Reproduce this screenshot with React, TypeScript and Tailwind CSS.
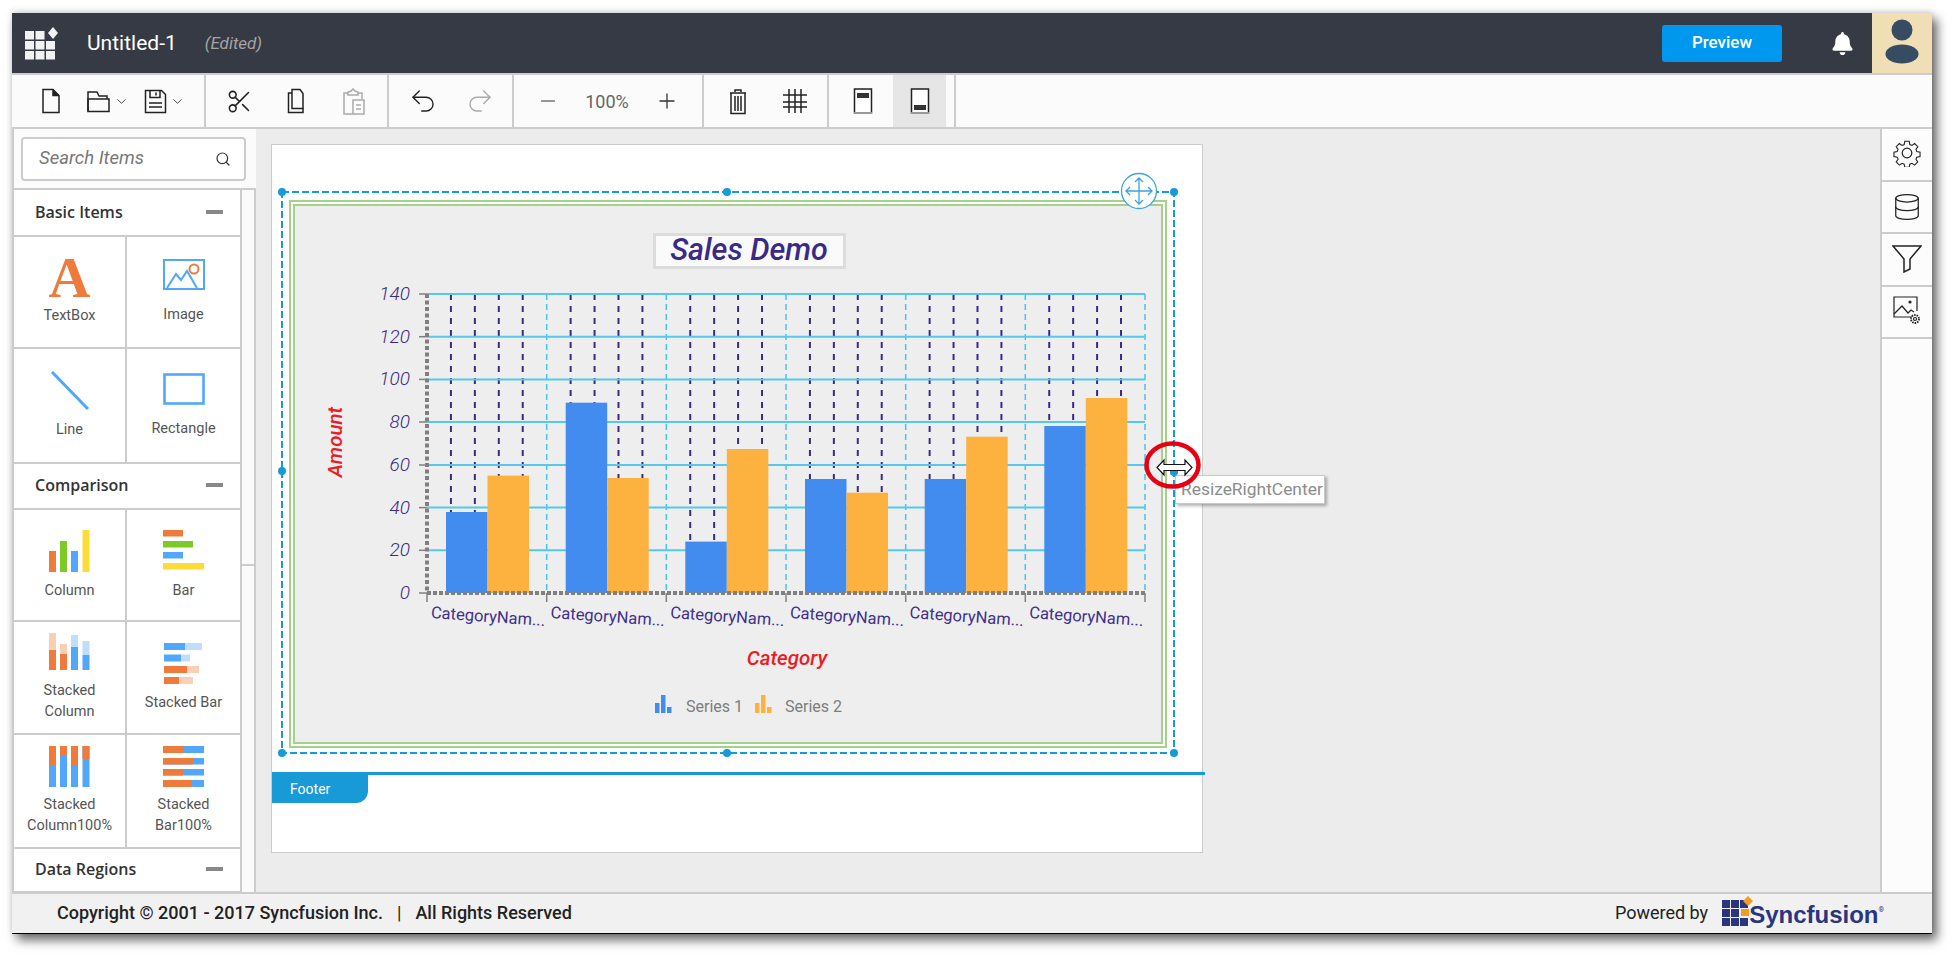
import React from 'react';
import { Scissors, Undo2, Redo2, Minus, Plus, Search, ChevronDown, Database } from 'lucide-react';
import { FaBell } from 'react-icons/fa';

const ORANGE = '#ee7b3c';
const ORANGE_LIGHT = '#f9cfb6';
const BLUE = '#52a7fb';
const BLUE_LIGHT = '#c0defc';
const GREEN = '#7dc926';
const YELLOW = '#fddc36';

// icons of the toolbar
const DocIcon = () => (
  <svg width="20" height="26" viewBox="0 0 20 26" fill="none" stroke="#222" strokeWidth="1.5">
    <path d="M2 1.5h10l6 6v17H2z" />
    <path d="M12 1.5v6h6" fill="#222" />
  </svg>
);
const FolderIcon = () => (
  <svg width="25" height="24" viewBox="0 0 25 24" fill="none" stroke="#222" strokeWidth="1.5">
    <path d="M2 22.5V3h9l2 4h8v3" />
    <path d="M2 10h21v12.5H2z" />
  </svg>
);
const SaveIcon = () => (
  <svg width="23" height="25" viewBox="0 0 23 25" fill="none" stroke="#222" strokeWidth="1.5">
    <path d="M1.5 1.5h16l4 4v18h-20z" />
    <path d="M6 1.5v7h10v-7" />
    <path d="M12 3.5v3" />
    <path d="M5 14h13M5 18h13" />
  </svg>
);
const CopyIcon = () => (
  <svg width="22" height="26" viewBox="0 0 22 26" fill="none" stroke="#222" strokeWidth="1.5">
    <path d="M6 20.5v-19h8l3 4v15z" />
    <path d="M6 5H2.5v19.5h14.5v-4" />
  </svg>
);
const PasteIcon = () => (
  <svg width="24" height="27" viewBox="0 0 24 27" fill="none" stroke="#aaa" strokeWidth="1.5">
    <path d="M6 5H2v21h9" />
    <path d="M16 5h4v6" />
    <path d="M6 7V4l3-1 2-2 2 2 3 1v3z" />
    <path d="M11 12h11v14H11zM14 17h5M14 21h5" />
  </svg>
);
const TrashIcon = () => (
  <svg width="20" height="27" viewBox="0 0 20 27" fill="none" stroke="#222" strokeWidth="1.5">
    <path d="M2 5h16M7 4V2h6v2" />
    <path d="M3 5v20.5h14V5" />
    <path d="M7 8v15M10 8v15M13 8v15" />
  </svg>
);
const GridIcon = () => (
  <svg width="26" height="26" viewBox="0 0 26 26" fill="none" stroke="#222" strokeWidth="1.5">
    <path d="M7 1v24M13 1v24M19 1v24M1 7h24M1 14h24M1 19h24" />
  </svg>
);
const DeviceIcon = ({ bottom }: { bottom?: boolean }) => (
  <svg width="20" height="26" viewBox="0 0 20 26" fill="none">
    <path d="M1.5 1h17v24h-17z" fill="#fff" stroke="#222" strokeWidth="1.5" />
    <path d="M1 25h18" stroke="#999" strokeWidth="2" />
    <rect x="4" y={bottom ? 17 : 5} width="12" height="5" fill="#333" />
  </svg>
);

const ToolButton = ({ children, active, wide }: { children: React.ReactNode; active?: boolean; wide?: boolean }) => (
  <div className={`flex h-full items-center justify-center ${wide ? 'w-[58px]' : 'w-[53px]'} ${active ? 'bg-[#e6e6e6]' : ''}`}>
    {children}
  </div>
);

const ToolGroup = ({ children, className }: { children: React.ReactNode; className: string }) => (
  <div className={`flex h-full gap-[4px] border-r-2 border-[#cccccc] ${className}`}>{children}</div>
);

const Toolbar = () => (
  <div className="flex h-[56px] border-y-2 border-[#cccccc] bg-[#fbfbfb]">
    <ToolGroup className="w-[194px] pl-[12px]">
      <ToolButton><DocIcon /></ToolButton>
      <ToolButton>
        <FolderIcon />
        <ChevronDown size={15} strokeWidth={1.4} className="ml-[3px] text-[#333]" />
      </ToolButton>
      <ToolButton>
        <SaveIcon />
        <ChevronDown size={15} strokeWidth={1.4} className="ml-[3px] text-[#333]" />
      </ToolButton>
    </ToolGroup>
    <ToolGroup className="w-[183px] pl-[7px]">
      <ToolButton><Scissors size={27} strokeWidth={1.4} className="text-[#222]" /></ToolButton>
      <ToolButton><CopyIcon /></ToolButton>
      <ToolButton><PasteIcon /></ToolButton>
    </ToolGroup>
    <ToolGroup className="w-[125px] pl-[7px]">
      <ToolButton><Undo2 size={30} strokeWidth={1.1} className="text-[#222]" /></ToolButton>
      <ToolButton><Redo2 size={30} strokeWidth={1.1} className="text-[#aaa]" /></ToolButton>
    </ToolGroup>
    <ToolGroup className="w-[190px] pl-[7px]">
      <ToolButton><Minus size={22} strokeWidth={1.3} className="text-[#333]" /></ToolButton>
      <ToolButton wide><span className="text-[18px] text-[#666]">100%</span></ToolButton>
      <ToolButton><Plus size={24} strokeWidth={1.3} className="text-[#333]" /></ToolButton>
    </ToolGroup>
    <ToolGroup className="w-[125px] pl-[7px]">
      <ToolButton><TrashIcon /></ToolButton>
      <ToolButton><GridIcon /></ToolButton>
    </ToolGroup>
    <ToolGroup className="w-[127px] pl-[7px]">
      <ToolButton><DeviceIcon /></ToolButton>
      <ToolButton active><DeviceIcon bottom /></ToolButton>
    </ToolGroup>
  </div>
);

const Header = () => (
  <div className="flex h-[60px] items-center bg-[#363a45]">
    <svg width="34" height="34" viewBox="0 0 34 34" className="ml-[13px]" fill="#f2f2f2">
      <rect x="0" y="5" width="9" height="8.5" />
      <rect x="10.5" y="5" width="9" height="8.5" />
      <rect x="0" y="15" width="9" height="8.5" />
      <rect x="10.5" y="15" width="9" height="8.5" />
      <rect x="21" y="15" width="9" height="8.5" />
      <rect x="0" y="25" width="9" height="8.5" />
      <rect x="10.5" y="25" width="9" height="8.5" />
      <rect x="21" y="25" width="9" height="8.5" />
      <path d="M28 1l5 6-5 6-5-6z" />
    </svg>
    <span className="ml-[28px] pt-[2px] text-[21px] text-white">Untitled-1</span>
    <span className="ml-[28px] pt-[2px] text-[17px] italic text-[#a5a5a5]">(Edited)</span>
    <button className="ml-auto h-[37px] w-[120px] rounded-[3px] bg-[#0098ee] text-[17px] font-medium text-white">Preview</button>
    <FaBell size={23} className="ml-[49px] text-white" />
    <div className="ml-[18px] flex h-full w-[60px] items-center justify-center bg-[#f0deb4]">
      <svg width="36" height="48" viewBox="0 0 36 48" fill="#364c63">
        <circle cx="18" cy="11" r="10.5" />
        <ellipse cx="18" cy="35" rx="16.5" ry="9.5" />
      </svg>
    </div>
  </div>
);

// icons of the item list
const TextBoxIcon = () => (
  <span className="block h-[40px] font-['Liberation_Serif',serif] text-[58px] leading-[40px] font-bold text-[#ee7b3c]">A</span>
);
const ImageIcon = () => (
  <svg width="42" height="32" viewBox="0 0 42 32" fill="none">
    <rect x="1" y="1" width="40" height="29" stroke={BLUE} strokeWidth="2" />
    <path d="M4 29l9-14 5 6 6-9 10 17" stroke={BLUE} strokeWidth="2" />
    <circle cx="31" cy="10" r="4.5" stroke={ORANGE} strokeWidth="2" />
  </svg>
);
const LineIcon = () => (
  <svg width="40" height="39" viewBox="0 0 40 39">
    <path d="M2 1l36 37" stroke={BLUE} strokeWidth="3" />
  </svg>
);
const RectIcon = () => (
  <svg width="42" height="32" viewBox="0 0 42 32" fill="none">
    <rect x="1.5" y="1.5" width="39" height="29" stroke={BLUE} strokeWidth="2.6" />
  </svg>
);
const ColumnIcon = () => (
  <svg width="42" height="42" viewBox="0 0 42 42">
    <rect x="0" y="21" width="7" height="21" fill={ORANGE} />
    <rect x="11" y="11" width="7" height="31" fill={GREEN} />
    <rect x="22" y="21" width="7" height="21" fill={BLUE} />
    <rect x="33.5" y="0" width="7" height="42" fill={YELLOW} />
  </svg>
);
const BarIcon = () => (
  <svg width="42" height="40" viewBox="0 0 42 40">
    <rect x="0" y="0" width="20" height="6.5" fill={ORANGE} />
    <rect x="0" y="11" width="30" height="6.5" fill={GREEN} />
    <rect x="0" y="22" width="20" height="6.5" fill={BLUE} />
    <rect x="0" y="33" width="41" height="6.5" fill={YELLOW} />
  </svg>
);
const StackedColumnIcon = () => (
  <svg width="42" height="37" viewBox="0 0 42 37">
    <rect x="0" y="0" width="7" height="17" fill={ORANGE_LIGHT} />
    <rect x="0" y="17" width="7" height="20" fill={ORANGE} />
    <rect x="11" y="11" width="7" height="10" fill={ORANGE_LIGHT} />
    <rect x="11" y="21" width="7" height="16" fill={ORANGE} />
    <rect x="22" y="2" width="7" height="12" fill={BLUE_LIGHT} />
    <rect x="22" y="14" width="7" height="23" fill={BLUE} />
    <rect x="33.5" y="8" width="7" height="14" fill={BLUE_LIGHT} />
    <rect x="33.5" y="22" width="7" height="15" fill={BLUE} />
  </svg>
);
const StackedBarIcon = () => (
  <svg width="40" height="41" viewBox="0 0 40 41">
    <rect x="0" y="0" width="21" height="7" fill={BLUE} />
    <rect x="21" y="0" width="17" height="7" fill={BLUE_LIGHT} />
    <rect x="0" y="11.5" width="17" height="7" fill={BLUE} />
    <rect x="17" y="11.5" width="9" height="7" fill={BLUE_LIGHT} />
    <rect x="0" y="23" width="23" height="7" fill={ORANGE} />
    <rect x="23" y="23" width="12" height="7" fill={ORANGE_LIGHT} />
    <rect x="0" y="34" width="15" height="7" fill={ORANGE} />
    <rect x="15" y="34" width="14" height="7" fill={ORANGE_LIGHT} />
  </svg>
);
const StackedColumn100Icon = () => (
  <svg width="42" height="41" viewBox="0 0 42 41">
    <rect x="0" y="0" width="7" height="41" fill={BLUE} />
    <rect x="0" y="0" width="7" height="20" fill={ORANGE} />
    <rect x="11" y="0" width="7" height="41" fill={BLUE} />
    <rect x="11" y="0" width="7" height="10" fill={ORANGE} />
    <rect x="22" y="0" width="7" height="41" fill={BLUE} />
    <rect x="22" y="0" width="7" height="20" fill={ORANGE} />
    <rect x="33.5" y="0" width="7" height="41" fill={BLUE} />
    <rect x="33.5" y="0" width="7" height="13" fill={ORANGE} />
  </svg>
);
const StackedBar100Icon = () => (
  <svg width="42" height="41" viewBox="0 0 42 41">
    <rect x="0" y="0" width="41" height="7" fill={BLUE} />
    <rect x="0" y="0" width="20" height="7" fill={ORANGE} />
    <rect x="0" y="12" width="41" height="6.5" fill={BLUE} />
    <rect x="0" y="12" width="30" height="6.5" fill={ORANGE} />
    <rect x="0" y="23" width="41" height="6.5" fill={BLUE} />
    <rect x="0" y="23" width="20" height="6.5" fill={ORANGE} />
    <rect x="0" y="34" width="41" height="7" fill={BLUE} />
    <rect x="0" y="34" width="28" height="7" fill={ORANGE} />
  </svg>
);

const SectionHeader = ({ title, className }: { title: string; className: string }) => (
  <div className={`flex items-center justify-between border-b-2 border-[#cccccc] pr-[17px] pb-[2px] pl-[21px] ${className}`}>
    <span className="font-['Open_Sans',sans-serif] text-[16px] font-semibold text-[#333]">{title}</span>
    <span className="h-[4px] w-[17px] bg-[#888888]" />
  </div>
);

const ItemRow = ({ left, right, className }: { left: React.ReactNode; right: React.ReactNode; className: string }) => (
  <div className={`grid grid-cols-[113px_113px] border-b-2 border-[#cccccc] ${className}`}>
    <div className="flex flex-col items-center justify-center border-r-2 border-[#cccccc]">{left}</div>
    <div className="flex flex-col items-center justify-center">{right}</div>
  </div>
);

const Item = ({ icon, label, gap }: { icon: React.ReactNode; label: React.ReactNode; gap: string }) => (
  <>
    {icon}
    <span className={`text-center text-[14.5px] leading-[21px] text-[#555] ${gap}`}>{label}</span>
  </>
);

const Sidebar = () => (
  <div className="flex w-[244px] flex-col border-l-2 border-[#cccccc] bg-[#fbfbfb]">
    <div className="h-[61px] border-b-2 border-[#cccccc] pt-[8px] pr-[9px] pl-[7px]">
      <div className="flex h-[44px] w-[225px] items-center justify-between rounded-[4px] border-2 border-[#cccccc] bg-white pr-[13px] pl-[16px]">
        <span className="text-[18.5px] text-[#777] italic">Search Items</span>
        <Search size={16} strokeWidth={1.8} className="text-[#333]" />
      </div>
    </div>
    <div className="flex min-h-0 flex-1">
      <div className="w-[228px] overflow-hidden border-r-2 border-[#cccccc] bg-white">
        <SectionHeader title="Basic Items" className="h-[47px]" />
        <ItemRow
          className="h-[112px]"
          left={<Item icon={<TextBoxIcon />} label="TextBox" gap="mt-[7px]" />}
          right={<Item icon={<ImageIcon />} label="Image" gap="mt-[13px]" />}
        />
        <ItemRow
          className="h-[115px]"
          left={<Item icon={<LineIcon />} label="Line" gap="mt-[9px]" />}
          right={<Item icon={<RectIcon />} label="Rectangle" gap="mt-[13px]" />}
        />
        <SectionHeader title="Comparison" className="h-[46px]" />
        <ItemRow
          className="h-[112px]"
          left={<Item icon={<ColumnIcon />} label="Column" gap="mt-[8px]" />}
          right={<Item icon={<BarIcon />} label="Bar" gap="mt-[10px]" />}
        />
        <ItemRow
          className="h-[113px]"
          left={<Item icon={<StackedColumnIcon />} label={<>Stacked<br />Column</>} gap="mt-[10px]" />}
          right={<Item icon={<StackedBarIcon />} label="Stacked Bar" gap="mt-[8px]" />}
        />
        <ItemRow
          className="h-[114px]"
          left={<Item icon={<StackedColumn100Icon />} label={<>Stacked<br />Column100%</>} gap="mt-[7px]" />}
          right={<Item icon={<StackedBar100Icon />} label={<>Stacked<br />Bar100%</>} gap="mt-[7px]" />}
        />
        <SectionHeader title="Data Regions" className="h-[44px] border-b-0" />
      </div>
      <div className="w-[14px] border-r-2 border-[#cccccc]">
        <div className="h-[376px] border-b-2 border-[#cccccc]" />
      </div>
    </div>
  </div>
);

// chart, all coordinates are the ones of the screen
const GRID_Y = [294, 336.7, 379.4, 422, 465, 507.6, 550.3, 593];
const Y_LABELS = ['140', '120', '100', '80', '60', '40', '20', '0'];
const GROUP_X = [427, 546.7, 666.3, 786, 905.7, 1025.3, 1145];
const BARS = [
  [512, 475.6],
  [402.7, 478],
  [541.6, 449],
  [479, 492.7],
  [479, 436.7],
  [426, 398],
];
const PURPLE = '#3a2a87';

const Chart = () => (
  <svg width="866" height="536" viewBox="295 206 866 536" className="block font-['Roboto',sans-serif]">
    {/* title */}
    <rect x="654.5" y="234.5" width="190" height="33" fill="#fafafa" stroke="#dcdcdc" strokeWidth="3" />
    <text x="749" y="260" textAnchor="middle" fontSize="30.5" fontStyle="italic" fontWeight="500" fill={PURPLE}>Sales Demo</text>

    {/* minor grid */}
    {GROUP_X.slice(0, 6).map(x =>
      [1, 2, 3, 4].map(n => (
        <line key={`${x}-${n}`} x1={x + n * 23.93} x2={x + n * 23.93} y1="294" y2="593" stroke={PURPLE} strokeWidth="2" strokeDasharray="6 6" />
      ))
    )}
    {GROUP_X.slice(1).map(x => (
      <line key={x} x1={x} x2={x} y1="294" y2="593" stroke="#45c4f0" strokeWidth="1.5" strokeDasharray="6 4" />
    ))}
    {GRID_Y.slice(0, 7).map(y => (
      <line key={y} x1="427" x2="1145" y1={y} y2={y} stroke="#55c8ee" strokeWidth="2" />
    ))}

    {/* bars */}
    {BARS.map(([blue, orange], i) => (
      <g key={i}>
        <rect x={GROUP_X[i] + 19} y={blue} width="41.5" height={593 - blue} fill="#428bef" />
        <rect x={GROUP_X[i] + 60.5} y={orange} width="41.5" height={593 - orange} fill="#fdb13e" />
      </g>
    ))}

    {/* axes */}
    <line x1="427" x2="427" y1="294" y2="593" stroke="#808080" strokeWidth="4" strokeDasharray="4 2.5" />
    <line x1="427" x2="1145" y1="593" y2="593" stroke="#808080" strokeWidth="4" strokeDasharray="4 2" />
    {GRID_Y.map(y => (
      <line key={y} x1="419" x2="427" y1={y} y2={y} stroke="#808080" strokeWidth="1.5" />
    ))}
    {GROUP_X.map(x => (
      <line key={x} x1={x} x2={x} y1="593" y2="602" stroke="#808080" strokeWidth="1.5" />
    ))}
    {GRID_Y.map((y, i) => (
      <text key={y} x="410" y={y + 6} textAnchor="end" fontSize="19" fontStyle="italic" fontWeight="300" fill={PURPLE}>{Y_LABELS[i]}</text>
    ))}

    {/* labels */}
    {GROUP_X.slice(0, 6).map(x => (
      <text key={x} x={x + 4} y="618" fontSize="16.5" fill="#40308c" transform={`rotate(4 ${x + 4} 613)`}>CategoryNam...</text>
    ))}
    <text x="787" y="665" textAnchor="middle" fontSize="20.5" fontStyle="italic" fontWeight="500" fill="#ed1c24">Category</text>
    <text x="342" y="442" textAnchor="middle" fontSize="20.5" fontStyle="italic" fontWeight="500" fill="#ed1c24" transform="rotate(-90 342 442)">Amount</text>

    {/* legend */}
    <g fill="#428bef">
      <rect x="655" y="703" width="4.5" height="10" />
      <rect x="661" y="695" width="4.5" height="18" />
      <rect x="667" y="707" width="4.5" height="6" />
    </g>
    <text x="686" y="711.5" fontSize="16" fill="#7d7d7d">Series 1</text>
    <g fill="#fdb13e">
      <rect x="755" y="703" width="4.5" height="10" />
      <rect x="761" y="695" width="4.5" height="18" />
      <rect x="767" y="707" width="4.5" height="6" />
    </g>
    <text x="785" y="711.5" fontSize="16" fill="#7d7d7d">Series 2</text>
  </svg>
);

// selection marquee, handles and the cursor, in screen coordinates
const SelectionOverlay = () => (
  <svg width="892" height="561" viewBox="282 192 892 561" className="pointer-events-none absolute top-0 left-0 overflow-visible">
    <rect x="282" y="192" width="892" height="561" fill="none" stroke="#169ad8" strokeWidth="2" strokeDasharray="7 3" />
    {[[282, 192], [727, 192], [1174, 192], [282, 471], [282, 753], [727, 753], [1174, 753], [1174, 472]].map(([x, y]) => (
      <circle key={`${x}-${y}`} cx={x} cy={y} r="4" fill="#169ad8" />
    ))}
    <circle cx="1139" cy="191" r="17.5" fill="#fff" stroke="#3ca4dc" strokeWidth="1.3" />
    <path
      d="M1139 178v26M1126 191h26M1135 182l4-4 4 4M1135 200l4 4 4-4M1130 187l-4 4 4 4M1148 187l4 4-4 4"
      fill="none"
      stroke="#3ca4dc"
      strokeWidth="1.3"
    />
    <ellipse cx="1172.5" cy="465" rx="26" ry="21.5" fill="none" stroke="#e60012" strokeWidth="4.5" />
    <path
      d="M1157 467.5l7-7.5v4.5h21V460l7 7.5-7 7.5v-4.5h-21v4.5z"
      fill="#fff"
      stroke="#111"
      strokeWidth="1.2"
    />
    <path d="M1164 465h21v5h-21z" fill="#fff" />
  </svg>
);

const Canvas = () => (
  <div className="flex-1 bg-[#ececec] pt-[15px] pl-[15px]">
    <div className="relative h-[709px] w-[932px] border border-[#cccccc] bg-white pt-[47px]">
      <div className="relative ml-[10px] h-[561px] w-[892px] pt-[8px] pl-[7px]">
        <div className="h-[548px] w-[878px] border-2 border-[#a5d28a] bg-white p-[2px]">
          <div className="h-full w-full border-2 border-[#a5d28a] bg-[#eeeeee]">
            <Chart />
          </div>
        </div>
      </div>
      <div className="absolute top-[330px] left-[903px] flex h-[29px] w-[150px] items-center border border-[#c9c9c9] bg-white pl-[5px] text-[17.4px] whitespace-nowrap text-[#8c8c8c] shadow-[2px_2px_3px_rgba(0,0,0,0.3)]">
        ResizeRightCenter
      </div>
      <div className="pointer-events-none absolute top-[47px] left-[10px]">
        <SelectionOverlay />
      </div>
      <div className="mt-[19px] w-[933px] border-t-[3px] border-[#189ad6]">
        <div className="flex h-[28px] w-[96px] items-center rounded-br-[12px] bg-[#189ad6] pl-[18px] text-[14px] text-white">Footer</div>
      </div>
    </div>
  </div>
);

const GearIcon = () => (
  <svg width="28" height="28" viewBox="0 0 28 28" fill="none" stroke="#222" strokeWidth="1.2" className="-mt-[3px]">
    <path d="M11.5 1h5l.6 3.600 2.400 1 3-2.100 3.500 3.500-2.100 3 1 2.400 3.600.6v5l-3.600.6-1 2.400 2.100 3-3.500 3.500-3-2.100-2.400 1-.6 3.600h-5l-.6-3.600-2.400-1-3 2.100-3.500-3.500 2.100-3-1-2.400-3.600-.6v-5l3.600-.6 1-2.400-2.100-3L5.500 3.500l3 2.100 2.400-1z" transform="translate(1.400 1.400) scale(.9)" />
    <circle cx="14" cy="14" r="4.800" />
  </svg>
);
const FunnelIcon = () => (
  <svg width="30" height="28" viewBox="0 0 30 28" fill="none" stroke="#222" strokeWidth="1.5">
    <path d="M1 1h28L18 14v10l-6 3V14z" />
  </svg>
);
const ImageGearIcon = () => (
  <svg width="29" height="31" viewBox="0 0 29 31" fill="none" stroke="#222" strokeWidth="1.2">
    <path d="M19 21H1V1h23v14" />
    <path d="M1 18l8-8 6 7 3-3 3 2" />
    <circle cx="17" cy="6" r="1" fill="#222" />
    <circle cx="22" cy="23" r="1.5" />
    <circle cx="22" cy="23" r="4" strokeDasharray="1.5 1" strokeWidth="1.8" />
  </svg>
);

const RightCell = ({ children }: { children?: React.ReactNode }) => (
  <div className="flex h-[52.5px] items-center justify-center border-b-2 border-[#cccccc]">{children}</div>
);

const RightPanel = () => (
  <div className="w-[52px] border-l-2 border-[#cccccc] bg-[#fcfcfc]">
    <RightCell><GearIcon /></RightCell>
    <RightCell><Database size={30} strokeWidth={1} className="text-[#222]" /></RightCell>
    <RightCell><FunnelIcon /></RightCell>
    <RightCell><ImageGearIcon /></RightCell>
  </div>
);

const SyncfusionLogo = () => (
  <div className="flex items-end">
    <svg width="31" height="33" viewBox="0 0 31 33">
      <g fill="#2a3580">
        <rect x="0" y="4" width="8" height="8" />
        <rect x="9" y="4" width="8" height="8" />
        <rect x="18" y="4" width="8" height="8" />
        <rect x="0" y="13" width="8" height="8" />
        <rect x="9" y="13" width="8" height="8" />
        <rect x="0" y="22" width="8" height="8" />
        <rect x="9" y="22" width="8" height="8" />
        <rect x="18" y="22" width="8" height="8" />
      </g>
      <rect x="19" y="13" width="8" height="7" fill="#f59a23" />
      <path d="M26 0l5 5-5 5-5-5z" fill="#f59a23" />
    </svg>
    <span className="-ml-[4px] mb-[1px] font-['Liberation_Sans',sans-serif] text-[24px] leading-[26px] font-bold text-[#2a3580]">Syncfusion</span>
    <span className="mb-[15px] text-[7px] leading-[8px] text-[#2a3580]">®</span>
  </div>
);

const Footer = () => (
  <div className="flex h-[42px] items-center border-t-2 border-b border-t-[#cccccc] border-b-black bg-[#f1f1f1] pr-[48px] pb-[2px] pl-[45px] text-[18px] text-[#222]">
    <span className="font-medium">Copyright © 2001 - 2017 Syncfusion Inc.</span>
    <span className="mx-[14px]">|</span>
    <span className="font-medium">All Rights Reserved</span>
    <span className="mr-[14px] ml-auto">Powered by</span>
    <SyncfusionLogo />
  </div>
);

export default function App() {
  return (
    <div className="h-[955px] w-[1952px] overflow-hidden bg-white pt-[13px] pl-[12px] font-['Roboto',sans-serif]">
      <div className="flex h-[921px] w-[1920px] flex-col bg-white shadow-[5px_6px_10px_rgba(0,0,0,0.6),0_-2px_6px_rgba(0,0,0,0.12)]">
        <Header />
        <Toolbar />
        <div className="flex min-h-0 flex-1">
          <Sidebar />
          <Canvas />
          <RightPanel />
        </div>
        <Footer />
      </div>
    </div>
  );
}
